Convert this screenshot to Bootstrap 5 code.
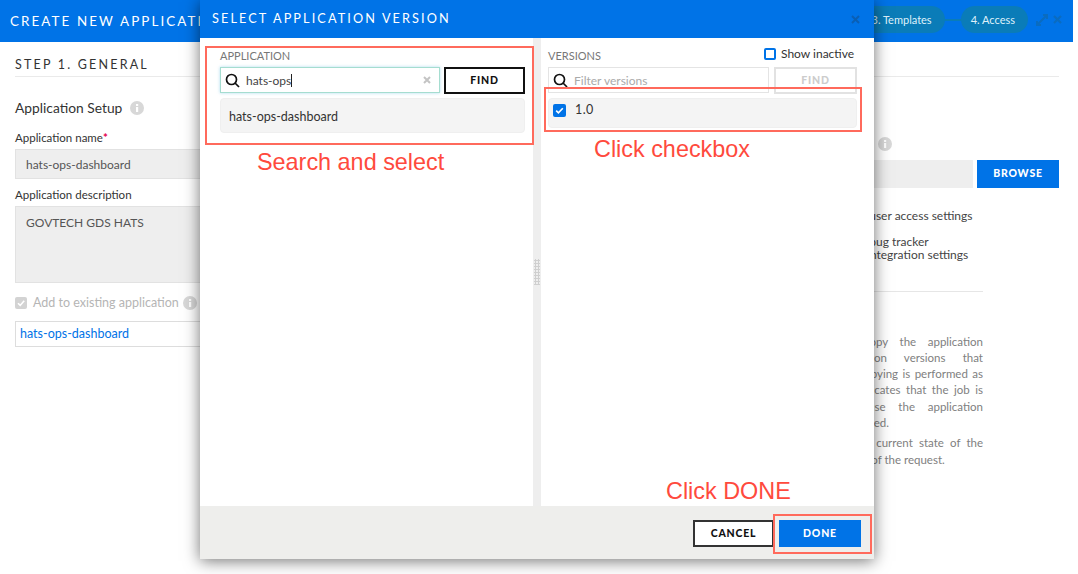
<!DOCTYPE html>
<html lang="en"><head>
<meta charset="UTF-8" />
<title>Select application version</title>
<link href="https://cdn.jsdelivr.net/npm/bootstrap@5.3.3/dist/css/bootstrap.min.css" rel="stylesheet" />
<style>
  html, body { height: 574px; overflow: hidden; }
  body { font-family: Lato, "Open Sans", sans-serif; font-size: 12px; color: #333; background: #fff; }
  .page-root { position: relative; width: 1073px; height: 574px; }
  .page-head { height: 42px; background: #0073e7; color: #fff; padding: 0 11px 0 10px; }
  .page-title { width: 190px; overflow: hidden; font-size: 13.4px; letter-spacing: 2.1px; white-space: nowrap; }
  .step-pill { background: #0a7cb8; color: #dff1fa; border-radius: 14px; height: 27px; font-size: 11px; line-height: 27px; padding: 0 13px 0 10px; margin-top: -3px; white-space: nowrap; }
  .step-link { width: 16px; height: 2px; background: #0a7cb8; margin-top: -3px; }
  .head-expand { margin: -3px 5px 0 8px; }
  .head-close { margin-top: -3px; }
  .page-main { padding: 0 14px 0 15px; }
  .step-title { font-size: 12.5px; letter-spacing: 2.2px; color: #333; padding: 15px 0 3px; border-bottom: 1px solid #eaeaea; height: 35px; line-height: 16px; }
  .side-left { width: 500px; padding-top: 22px; }
  .side-right { width: 460px; margin-left: 84px; padding-top: 60px; }
  .setup-title { font-size: 13.8px; line-height: 18px; color: #333; margin-bottom: 14px; }
  .info-dot { display: inline-block; vertical-align: -2px; margin-left: 4px; }
  .fld-label { font-size: 11.5px; line-height: 14px; margin-bottom: 4px; color: #333; }
  .req-star { color: #e5004c; font-weight: 700; }
  .ro-box { background: #eee; border: 1px solid #e2e2e2; border-radius: 0; height: 30px; font-size: 12px; color: #555; padding: 0 10px; box-shadow: none; margin-bottom: 9px; }
  .ro-area { height: 77px; padding-top: 7px; resize: none; margin-bottom: 13px; }
  .ro-area:disabled, .ro-box:disabled { background: #eee; opacity: 1; }
  .exist-check { font-size: 12.5px; color: #b5b5b5; line-height: 14px; margin-bottom: 11px; }
  .exist-box { width: 12px; height: 12px; background: #d3d3d3; border-radius: 2px; margin-right: 6px; }
  .exist-input { height: 26px; border: 1px solid #ddd; color: #0073e7; font-size: 12.5px; line-height: 24px; padding-left: 4px; }
  .upload-label { width: 293px; height: 14px; line-height: 14px; margin-bottom: 9px; text-align: right; font-size: 11.5px; }
  .browse-row { height: 28px; }
  .browse-fill { background: #eee; flex: 1; margin-right: 4px; }
  .btn-browse { width: 82px; height: 28px; background: #0073e7; color: #fff; font-size: 10.5px; font-weight: 900; letter-spacing: .8px; border: 0; border-radius: 0; padding: 0; }
  .opt-text { font-size: 12px; line-height: 13.5px; color: #444; margin-left: 240px; }
  .opt-first { margin-top: 21px; }
  .opt-second { margin-top: 12px; }
  .opt-indent { padding-left: 28px; }
  .help-wrap { width: 384px; }
  .help-rule { border-top: 1px solid #e6e6e6; margin-top: 29px; }
  .help-copy { margin-top: 42px; color: #808080; font-size: 11.5px; line-height: 16.3px; }
  .help-line { text-align: justify; text-align-last: justify; white-space: nowrap; }
  .help-end { text-align-last: left; }

  .pick-modal { position: absolute; left: 200px; top: 0; width: 674px; height: 559px; background: #fff; box-shadow: 0 2px 15px rgba(0,0,0,.55); }
  .pick-head { height: 38px; background: #0073e7; color: #fff; padding: 0 14px 0 12px; }
  .pick-title { font-size: 12.7px; letter-spacing: 2.1px; }
  .pick-body { height: 468px; }
  .pick-col { width: 333px; padding: 10px 8px 0 20px; }
  .pick-col-r { padding: 10px 17px 0 7px; }
  .pick-split { width: 8px; background: #eee; }
  .split-grip { width: 6px; height: 26px; background-image: radial-gradient(#cfcfcf 1px, transparent 1.2px); background-size: 3px 3px; }
  .pick-foot { height: 53px; background: #eeeeec; padding-right: 13px; padding-top: 14px; }
  .col-label { font-size: 11px; color: #777; line-height: 14px; height: 19px; padding-top: 1px; }
  .search-box { height: 26px; width: 220px; border: 1px solid #a5ddd0; background: #fff; box-shadow: 0 0 3px rgba(120,200,230,.6); padding: 0 8px 0 4px; font-size: 12px; color: #444; }
  .search-text { padding-top: 2px; margin-left: -2px; }
  .search-off { border: 1px solid #e4e4e4; box-shadow: none; color: #aaa; width: 221px; }
  .caret-mark { border-left: 1px solid #222; height: 13px; display: inline-block; vertical-align: -2px; }
  .btn-find { width: 81px; height: 27px; border: 2px solid #111; border-radius: 0; background: #fff; font-size: 10.5px; font-weight: 900; letter-spacing: .8px; color: #111; padding: 0; }
  .btn-find:disabled { width: 83px; border: 2px solid #e2e2e2; color: #ccc; opacity: 1; }
  .res-row { background: #f4f4f4; border: 1px solid #efefef; border-radius: 4px; margin-top: 4px; height: 35px; font-size: 12.5px; color: #333; padding: 3px 0 0 8px; }
  .res-row-v { height: 30px; padding: 0 0 5px 4px; letter-spacing: .4px; }
  .inactive-check { position: absolute; left: 764px; top: 47px; font-size: 12px; color: #333; line-height: 14px; }
  .box-off { width: 12px; height: 12px; border: 2px solid #0073e7; border-radius: 2px; margin-right: 5px; }
  .box-on { width: 13px; height: 13px; background: #0073e7; border-radius: 2px; margin-right: 9px; }
  .btn-cancel { width: 81px; height: 27px; border: 2px solid #333; border-radius: 0; background: #fff; font-size: 10.5px; font-weight: 900; letter-spacing: .8px; color: #111; padding: 0; margin-right: 5px; }
  .btn-done { width: 82px; height: 27px; background: #0073e7; border: 0; border-radius: 0; color: #fff; font-size: 10.5px; font-weight: 900; letter-spacing: .8px; padding: 0; }

  .mark-box { position: absolute; border: 2px solid #ff6a5c; pointer-events: none; }
  .mark-a { left: 205px; top: 46px; width: 329px; height: 99px; }
  .mark-b { left: 544px; top: 87px; width: 318px; height: 45px; }
  .mark-c { left: 773px; top: 514px; width: 99px; height: 40px; }
  .mark-text { position: absolute; font-family: "Liberation Sans", Arial, sans-serif; font-size: 23.4px; line-height: 28px; color: #ff4a3d; white-space: nowrap; }
  .text-a { left: 257px; top: 148px; }
  .text-b { left: 594px; top: 135px; }
  .text-c { left: 666px; top: 477px; }
</style>
</head>
<body>
<div class="page-root">
  <div class="page-head d-flex align-items-center justify-content-between">
    <div class="page-title">CREATE NEW APPLICATION</div>
    <div class="d-flex align-items-center">
      <div class="step-pill">3. Templates</div>
      <div class="step-link"></div>
      <div class="step-pill">4. Access</div>
      <svg class="head-expand" width="12" height="12" viewBox="0 0 12 12" fill="none" stroke="#0a6cc0" stroke-width="2"><path d="M1 11 11 1M7 1H11V5M1 7V11H5"/></svg>
      <svg class="head-close" width="9" height="9" viewBox="0 0 9 9" stroke="#0a6cc0" stroke-width="2.2"><path d="M1 1 8 8M8 1 1 8"/></svg>
    </div>
  </div>

  <div class="page-main">
    <div class="step-title">STEP 1. GENERAL</div>
    <div class="d-flex">
      <div class="side-left">
        <div class="setup-title">Application Setup
          <svg class="info-dot" width="14" height="14" viewBox="0 0 14 14"><circle cx="7" cy="7" r="7" fill="#d8d8d8"/><rect x="6" y="6" width="2.2" height="5" fill="#fff"/><rect x="6" y="3" width="2.2" height="2" fill="#fff"/></svg>
        </div>
        <div class="fld-label">Application name<span class="req-star">*</span></div>
        <input class="form-control ro-box" value="hats-ops-dashboard" disabled />
        <div class="fld-label">Application description</div>
        <textarea class="form-control ro-box ro-area" disabled>GOVTECH GDS HATS</textarea>
        <div class="exist-check d-flex align-items-center">
          <svg class="exist-box" viewBox="0 0 12 12" fill="none" stroke="#fff" stroke-width="1.6"><path d="M3 6.2 5.2 8.4 9.2 3.8"/></svg>
          Add to existing application
          <svg class="info-dot" width="14" height="14" viewBox="0 0 14 14"><circle cx="7" cy="7" r="7" fill="#d8d8d8"/><rect x="6" y="6" width="2.2" height="5" fill="#fff"/><rect x="6" y="3" width="2.2" height="2" fill="#fff"/></svg>
        </div>
        <div class="exist-input">hats-ops-dashboard</div>
      </div>

      <div class="side-right">
        <div class="upload-label">Application image
          <svg class="info-dot" width="14" height="14" viewBox="0 0 14 14"><circle cx="7" cy="7" r="7" fill="#d8d8d8"/><rect x="6" y="6" width="2.2" height="5" fill="#fff"/><rect x="6" y="3" width="2.2" height="2" fill="#fff"/></svg>
        </div>
        <div class="d-flex browse-row">
          <div class="browse-fill"></div>
          <button class="btn btn-browse">BROWSE</button>
        </div>
        <div class="opt-text opt-first">Copy user access settings</div>
        <div class="opt-text opt-second">Copy bug tracker<br /><span class="opt-indent">integration settings</span></div>
        <div class="help-wrap">
          <div class="help-rule"></div>
          <div class="help-copy">
            <div class="help-line">Use this option to first select and then copy the application</div>
            <div class="help-line">Choose only those very specific application versions that</div>
            <div class="help-line">you will need to copy over to the new one now. Copying is performed as</div>
            <div class="help-line">a background job and the status indicator here indicates that the job is</div>
            <div class="help-line">running. Until it finishes you cannot yet use the application</div>
            <div class="help-line help-end">that is created until the whole copying job has completed.</div>
            <div class="help-line mt-1">You can also open the job list page to check the current state of the</div>
            <div class="help-line help-end">progress and the final outcomes and the overall result of the request.</div>
          </div>
        </div>
      </div>
    </div>
  </div>

  <div class="pick-modal">
    <div class="pick-head d-flex align-items-center justify-content-between">
      <div class="pick-title">SELECT APPLICATION VERSION</div>
      <svg width="9" height="9" viewBox="0 0 9 9" stroke="#0a5fb4" stroke-width="2"><path d="M1 1 8 8M8 1 1 8"/></svg>
    </div>
    <div class="pick-body d-flex">
      <div class="pick-col">
        <div class="col-label">APPLICATION</div>
        <div class="d-flex justify-content-between align-items-start">
          <div class="search-box d-flex align-items-center">
            <svg class="me-2" width="15" height="15" viewBox="0 0 15 15" fill="none" stroke="#111" stroke-width="1.7"><circle cx="6.5" cy="6.5" r="5"/><path d="M10 10 14 14"/></svg>
            <span class="search-text">hats-ops<span class="caret-mark"></span></span>
            <svg class="ms-auto" width="8" height="8" viewBox="0 0 8 8" stroke="#c4c4c4" stroke-width="2"><path d="M1 1 7 7M7 1 1 7"/></svg>
          </div>
          <button class="btn btn-find">FIND</button>
        </div>
        <div class="res-row d-flex align-items-center">hats-ops-dashboard</div>
      </div>
      <div class="pick-split d-flex align-items-center justify-content-center"><div class="split-grip"></div></div>
      <div class="pick-col pick-col-r">
        <div class="col-label">VERSIONS</div>
        <div class="d-flex justify-content-between align-items-start">
          <div class="search-box search-off d-flex align-items-center">
            <svg class="me-2" width="15" height="15" viewBox="0 0 15 15" fill="none" stroke="#111" stroke-width="1.7"><circle cx="6.5" cy="6.5" r="5"/><path d="M10 10 14 14"/></svg>
            <span class="search-text">Filter versions</span>
          </div>
          <button class="btn btn-find" disabled>FIND</button>
        </div>
        <div class="res-row res-row-v d-flex align-items-center">
          <svg class="box-on" viewBox="0 0 13 13" fill="none" stroke="#fff" stroke-width="1.6"><path d="M3.2 6.6 5.4 8.8 9.8 4.2"/></svg>
          1.0
        </div>
      </div>
    </div>
    <div class="pick-foot d-flex justify-content-end">
      <button class="btn btn-cancel">CANCEL</button>
      <button class="btn btn-done">DONE</button>
    </div>
  </div>

  <div class="inactive-check d-flex align-items-center">
    <span class="box-off d-inline-block"></span>Show inactive
  </div>

  <div class="mark-box mark-a"></div>
  <div class="mark-box mark-b"></div>
  <div class="mark-box mark-c"></div>
  <div class="mark-text text-a">Search and select</div>
  <div class="mark-text text-b">Click checkbox</div>
  <div class="mark-text text-c">Click DONE</div>
</div>
<script src="https://cdn.jsdelivr.net/npm/bootstrap@5.3.3/dist/js/bootstrap.bundle.min.js"></script>
</body>
</html>
